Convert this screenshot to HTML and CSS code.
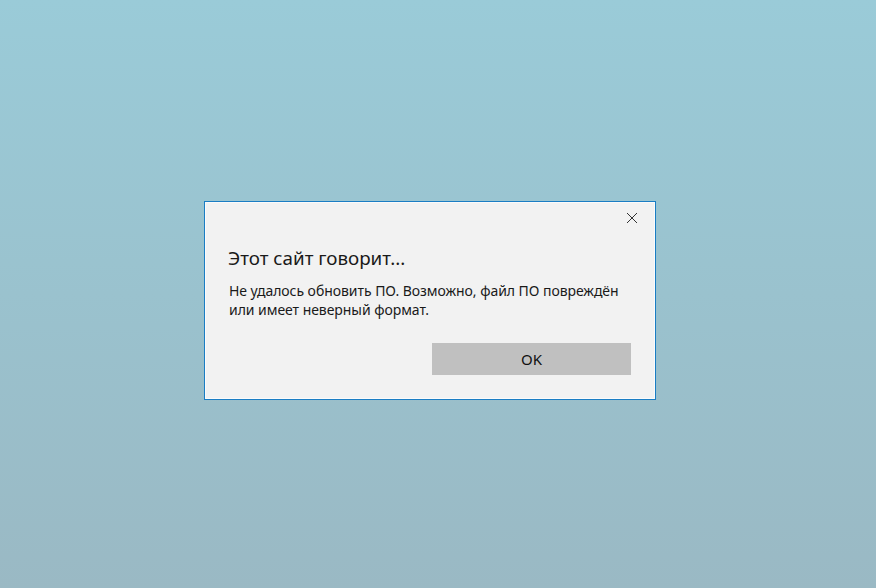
FILE: index.html
```html
<!DOCTYPE html>
<html lang="ru">
<head>
<meta charset="utf-8">
<link rel="stylesheet" href="styles.css">
</head>
<body>
<div class="dialog">
  <div class="topbar">
    <button class="close" aria-label="Закрыть">
      <svg width="12" height="12" viewBox="0 0 12 12"><path d="M1 1 L11 11 M11 1 L1 11" stroke="#333" stroke-width="1" fill="none"/></svg>
    </button>
  </div>
  <div class="content">
    <h1 class="title">Этот сайт говорит...</h1>
    <p class="message">Не удалось обновить ПО. Возможно, файл ПО повреждён<br>или имеет неверный формат.</p>
    <div class="actions">
      <button class="ok">OK</button>
    </div>
  </div>
</div>
</body>
</html>
```
FILE: styles.css
```css
html, body {
  margin: 0;
  height: 100%;
}
body {
  background: linear-gradient(to bottom, #9acbd8 0%, #9ab9c4 100%);
  font-family: "Noto Sans", "Open Sans", sans-serif;
  padding: 201px 0 0 204px;
  box-sizing: border-box;
}
.dialog {
  width: 452px;
  height: 199px;
  box-sizing: border-box;
  background: #f2f2f2;
  border: 1px solid #1a7dc4;
  box-shadow: inset 0 0 0 1px #fbfbfb;
  display: flex;
  flex-direction: column;
}
.topbar {
  display: flex;
  justify-content: flex-end;
  padding: 10px 17px 0 0;
  height: 22px;
}
.close {
  background: none;
  border: none;
  padding: 0;
  width: 12px;
  height: 12px;
  display: flex;
}
.content {
  padding: 0 24px 0 23px;
}
.title {
  margin: 11px 0 0 0;
  font-size: 18.8px;
  font-weight: normal;
  color: #1a1a1a;
  line-height: 26px;
}
.message {
  margin: 10px 0 0 1px;
  font-size: 14px;
  letter-spacing: -0.05px;
  line-height: 19px;
  color: #1a1a1a;
}
.actions {
  display: flex;
  justify-content: flex-end;
  margin-top: 24px;
}
.ok {
  width: 199px;
  height: 32px;
  background: #c0c0c0;
  border: none;
  font-family: inherit;
  font-size: 15px;
  color: #111;
  padding: 0;
}
```
